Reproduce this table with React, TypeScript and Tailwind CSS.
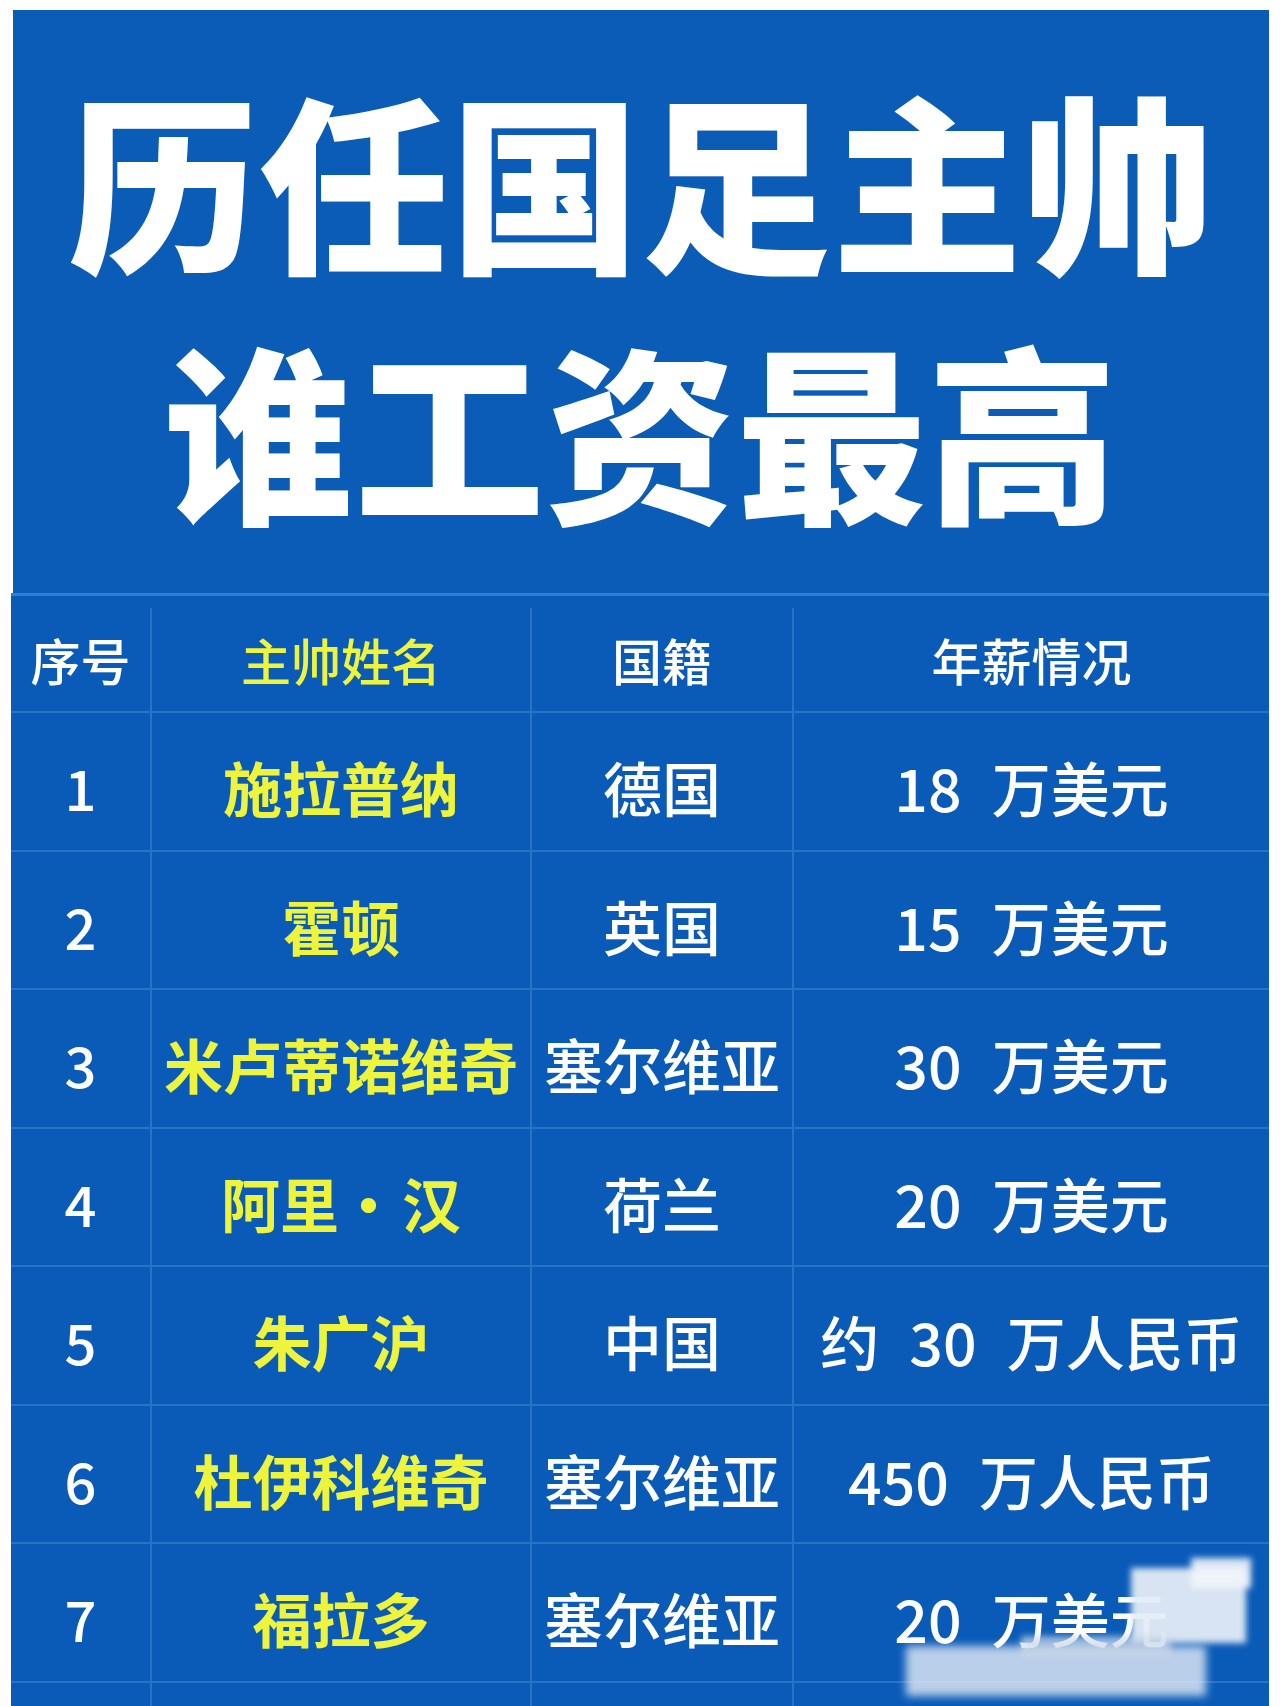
import React from "react";

type Row = {
  no: string;
  name: React.ReactNode;
  nation: string;
  salary: string[];
};

const rows: Row[] = [
  { no: "1", name: "施拉普纳", nation: "德国", salary: ["18", "万美元"] },
  { no: "2", name: "霍顿", nation: "英国", salary: ["15", "万美元"] },
  { no: "3", name: "米卢蒂诺维奇", nation: "塞尔维亚", salary: ["30", "万美元"] },
  {
    no: "4",
    name: (
      <>
        <span>阿里</span>
        <span>·</span>
        <span className="ml-[4px]">汉</span>
      </>
    ),
    nation: "荷兰",
    salary: ["20", "万美元"],
  },
  { no: "5", name: "朱广沪", nation: "中国", salary: ["约", "30", "万人民币"] },
  { no: "6", name: "杜伊科维奇", nation: "塞尔维亚", salary: ["450", "万人民币"] },
  { no: "7", name: "福拉多", nation: "塞尔维亚", salary: ["20", "万美元"] },
];

const font = { fontFamily: '"Noto Sans CJK SC", "Noto Sans", sans-serif' };

const line = "border-[#2a72c6]";

function Cell({
  width,
  children,
  last,
  className = "",
}: {
  width: string;
  children?: React.ReactNode;
  last?: boolean;
  className?: string;
}) {
  return (
    <div
      className={`${width} flex items-center justify-center ${
        last ? "" : `border-r-2 ${line}`
      } ${className}`}
    >
      {children}
    </div>
  );
}

export default function App() {
  return (
    <div className="w-[1280px] h-[1706px] bg-white overflow-hidden" style={font}>
      <div className="ml-[11px] w-[1258px] pt-[10px]">
        {/* title */}
        <div className="ml-[2px] w-[1256px] h-[583px] bg-[#0b5cb6] pt-[42px] flex flex-col items-center text-white font-black">
          <div className="text-[190px] leading-[250px] tracking-[1px]">历任国足主帅</div>
          <div className="text-[190px] leading-[250px] tracking-[1px]">谁工资最高</div>
        </div>

        {/* table */}
        <div className="relative bg-[#0a5bb8] border-t-[3px] border-[#2f7fd8]">
          <div className={`flex h-[117px] border-b-2 ${line} text-[50px] font-medium text-white pt-[12px]`}>
            <Cell width="w-[141px]">序号</Cell>
            <Cell width="w-[380px]" className="text-[#eef43c]">主帅姓名</Cell>
            <Cell width="w-[262px]">国籍</Cell>
            <Cell width="flex-1" last>年薪情况</Cell>
          </div>

          {rows.map((r) => (
            <div key={r.no} className={`flex h-[138.5px] border-b-2 ${line} text-[59px] font-bold text-white`}>
              <Cell width="w-[141px]" className="pt-[12px] text-[56px] font-medium">
                {r.no}
              </Cell>
              <Cell width="w-[380px]" className="pt-[12px] text-[#eef43c]">
                {r.name}
              </Cell>
              <Cell width="w-[262px]" className="pt-[12px] font-medium">
                {r.nation}
              </Cell>
              <Cell width="flex-1" last className="pt-[12px] gap-[30px] font-medium">
                {r.salary.map((s, i) => (
                  <span key={i}>{s}</span>
                ))}
              </Cell>
            </div>
          ))}

          <div className="flex h-[40px]">
            <Cell width="w-[141px]" />
            <Cell width="w-[380px]" />
            <Cell width="w-[262px]" />
            <Cell width="flex-1" last />
          </div>

          {/* blurred watermark */}
          <div className="absolute left-[1120px] top-[972px] w-[115px] h-[75px] bg-[#e4ecf6]/95 blur-[3px]" />
          <div className="absolute left-[1180px] top-[962px] w-[60px] h-[30px] bg-[#f2f5fa]/90 blur-[3px]" />
          <div className="absolute left-[895px] top-[1050px] w-[300px] h-[50px] bg-[#e6ecf5]/80 blur-[4px]" />
          <div className="absolute left-[1010px] top-[1040px] w-[150px] h-[20px] bg-[#cdd9ea]/70 blur-[3px]" />
        </div>
      </div>
    </div>
  );
}
